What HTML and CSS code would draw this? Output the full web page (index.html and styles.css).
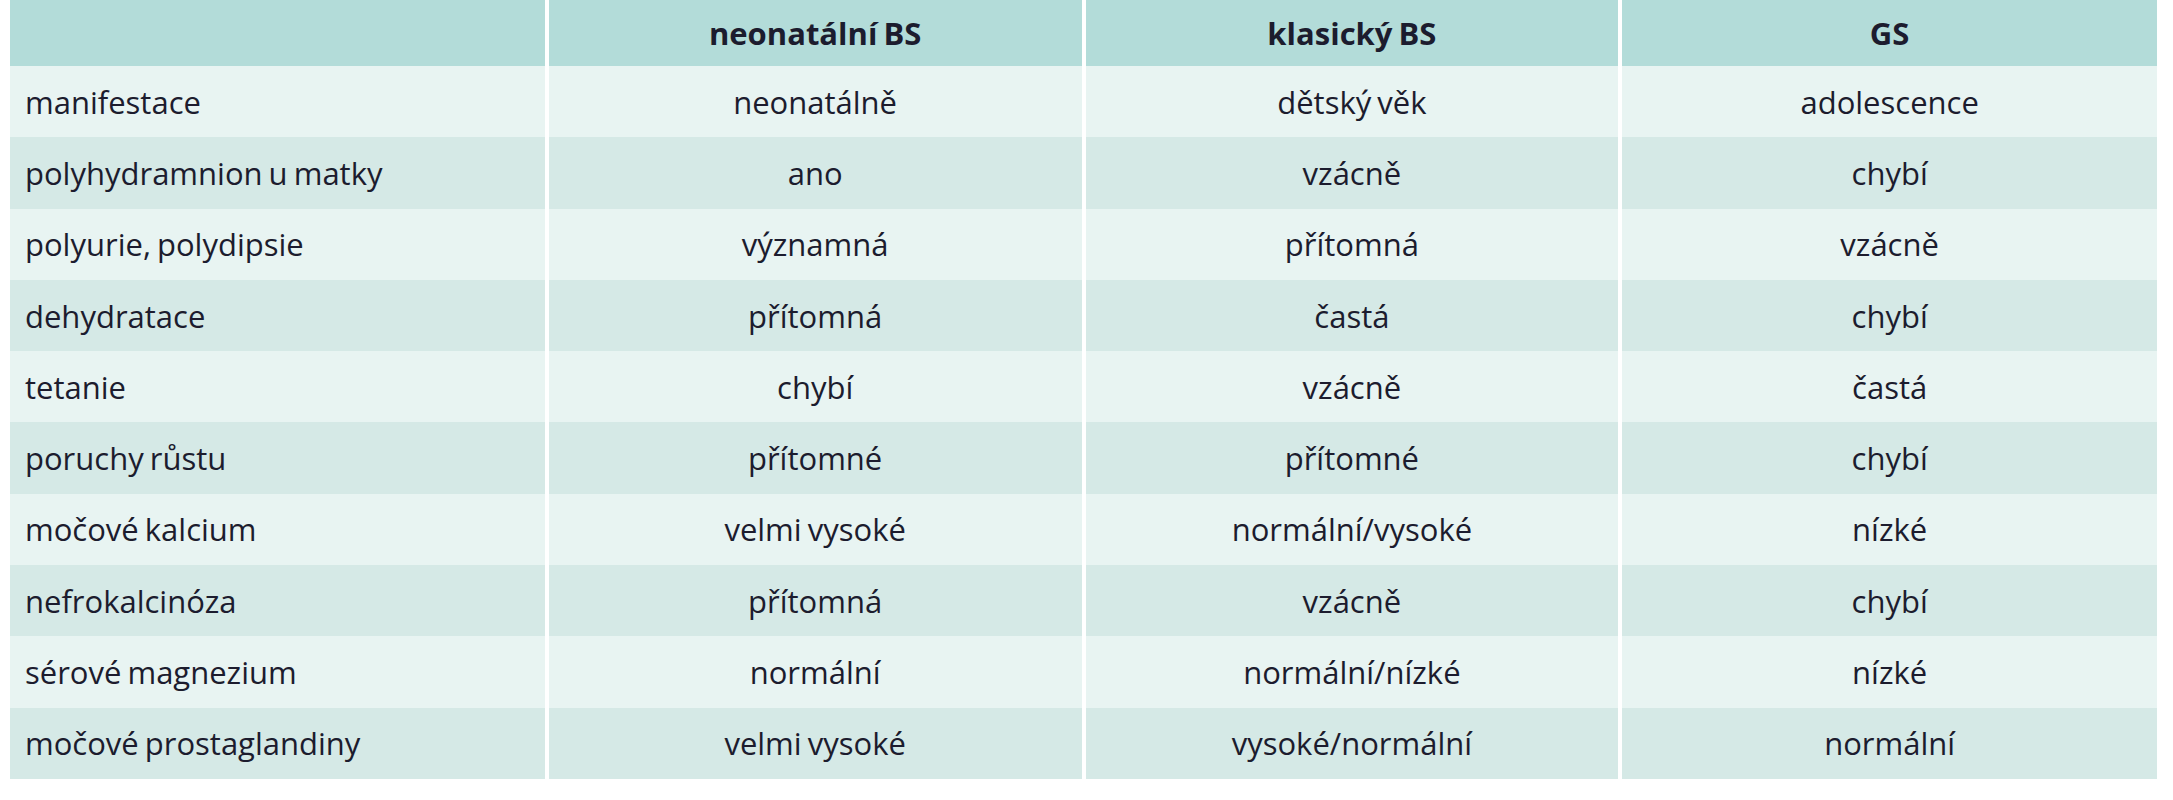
FILE: index.html
```html
<!DOCTYPE html>
<html lang="cs">
<head>
<meta charset="utf-8">
<title>Srovnání BS a GS</title>
<link rel="stylesheet" href="styles.css">
</head>
<body>
<div class="wrap">
<table class="cmp">
  <colgroup>
    <col class="c"><col class="c"><col class="c"><col class="c">
  </colgroup>
  <thead>
    <tr><th></th><th>neonatální BS</th><th>klasický BS</th><th>GS</th></tr>
  </thead>
  <tbody>
    <tr><td>manifestace</td><td>neonatálně</td><td>dětský věk</td><td>adolescence</td></tr>
    <tr><td>polyhydramnion u matky</td><td>ano</td><td>vzácně</td><td>chybí</td></tr>
    <tr><td>polyurie, polydipsie</td><td>významná</td><td>přítomná</td><td>vzácně</td></tr>
    <tr><td>dehydratace</td><td>přítomná</td><td>častá</td><td>chybí</td></tr>
    <tr><td>tetanie</td><td>chybí</td><td>vzácně</td><td>častá</td></tr>
    <tr><td>poruchy růstu</td><td>přítomné</td><td>přítomné</td><td>chybí</td></tr>
    <tr><td>močové kalcium</td><td>velmi vysoké</td><td>normální/vysoké</td><td>nízké</td></tr>
    <tr><td>nefrokalcinóza</td><td>přítomná</td><td>vzácně</td><td>chybí</td></tr>
    <tr><td>sérové magnezium</td><td>normální</td><td>normální/nízké</td><td>nízké</td></tr>
    <tr><td>močové prostaglandiny</td><td>velmi vysoké</td><td>vysoké/normální</td><td>normální</td></tr>
  </tbody>
</table>
</div>
</body>
</html>
```

FILE: styles.css
```css
html, body {
  margin: 0;
  padding: 0;
  background: #ffffff;
}

.wrap {
  padding: 0 10px;
}

.cmp {
  width: 2147px;
  border-collapse: collapse;
  table-layout: fixed;
  font-family: "Open Sans", "Noto Sans", sans-serif;
  font-size: 31px;
  font-weight: 500;
  word-spacing: -2px;
  color: #1c1c2e;
}

.cmp th,
.cmp td {
  padding: 0 15px;
  text-align: center;
  white-space: nowrap;
  border-left: 4px solid #ffffff;
}

.cmp th:first-child,
.cmp td:first-child {
  border-left: 0;
  text-align: left;
}

.cmp thead th {
  height: 66px;
  background: #b3dcd9;
  font-weight: 700;
}

.cmp tbody td {
  height: 71.3px;
}

.cmp tbody tr:nth-child(odd) td {
  background: #e8f4f2;
}

.cmp tbody tr:nth-child(even) td {
  background: #d5e9e6;
}
```
